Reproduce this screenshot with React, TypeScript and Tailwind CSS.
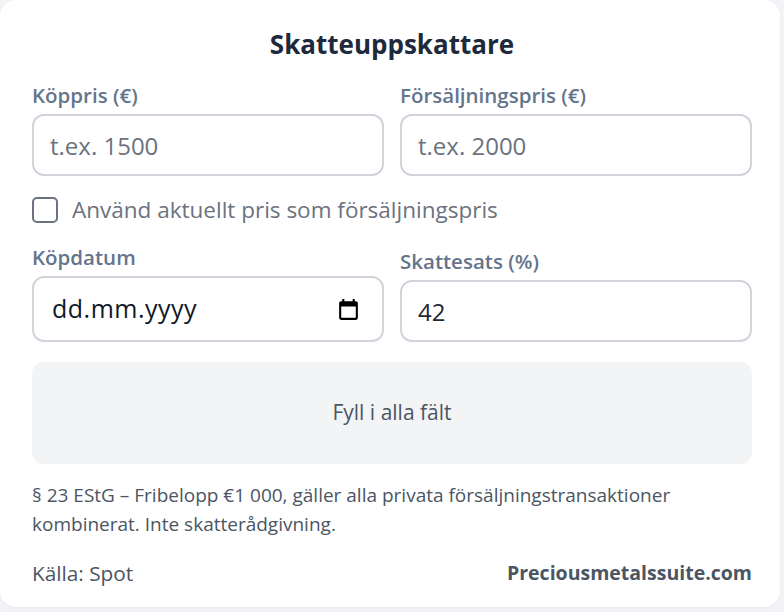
import { useState } from "react"

function Field({ label, children }: { label: string; children: React.ReactNode }) {
  return (
    <div className="flex flex-col">
      <label className="mb-[5px] text-[20.5px] font-semibold leading-[28px] text-[#64748b]">{label}</label>
      {children}
    </div>
  )
}

const inputCls =
  "w-full h-[62px] rounded-[12px] border-2 border-[#d1d5db] bg-white px-[16px] text-[24px] text-[#1f2937] placeholder:text-[#6b7280] outline-none"

function CalendarIcon() {
  return (
    <svg width="25" height="25" viewBox="0 0 24 24" className="shrink-0 text-black">
      <path
        d="M19 4h-1V2h-2v2H8V2H6v2H5c-1.11 0-2 .9-2 2v14a2 2 0 0 0 2 2h14c1.1 0 2-.9 2-2V6c0-1.1-.9-2-2-2zm0 16H5V9h14v11z"
        fill="currentColor"
      />
    </svg>
  )
}

export default function App() {
  const [rate, setRate] = useState("42")
  const [useSpot, setUseSpot] = useState(false)

  return (
    <div className="min-h-[612px] w-[784px] bg-[#f1f3f6] font-['Open_Sans',sans-serif]">
      <div className="w-[780px] h-[607px] rounded-[16px] bg-white pl-[32px] pr-[28px] pt-[26px] shadow-[0_1px_3px_rgba(0,0,0,0.04)]">
        <h2 className="text-center text-[26px] font-bold leading-[36px] text-[#1e293b]">Skatteuppskattare</h2>

        <div className="mt-[19px] grid grid-cols-2 gap-x-[16px]">
          <Field label="Köppris (€)">
            <input type="number" placeholder="t.ex. 1500" className={inputCls} />
          </Field>
          <Field label="Försäljningspris (€)">
            <input type="number" placeholder="t.ex. 2000" className={inputCls} />
          </Field>
        </div>

        <label className="mt-[20px] flex items-center gap-[14px] text-[22.5px] leading-[28px] text-[#6b7280]">
          <input
            type="checkbox"
            checked={useSpot}
            onChange={(e) => setUseSpot(e.target.checked)}
            className="h-[26px] w-[26px] shrink-0 appearance-none rounded-[5px] border-2 border-[#6b7280] bg-white"
          />
          Använd aktuellt pris som försäljningspris
        </label>

        <div className="mt-[19px] grid grid-cols-2 items-end gap-x-[16px]">
          <Field label="Köpdatum">
            <div className="flex h-[66px] w-full items-center justify-between rounded-[12px] border-2 border-[#d1d5db] bg-white pl-[18px] pr-[21px]">
              <input
                type="text"
                placeholder="dd.mm.yyyy"
                className="w-full bg-transparent text-[25px] tracking-[0.5px] text-[#111827] placeholder:text-[#111827] outline-none"
              />
              <CalendarIcon />
            </div>
          </Field>
          <Field label="Skattesats (%)">
            <input type="number" value={rate} onChange={(e) => setRate(e.target.value)} className={inputCls} />
          </Field>
        </div>

        <div className="mt-[20px] flex h-[102px] items-center justify-center rounded-[12px] bg-[#f3f4f6] text-[21px] text-[#4b5563]">
          Fyll i alla fält
        </div>

        <p className="mt-[17px] max-w-[690px] text-[19px] leading-[29px] text-[#4b5563]">
          § 23 EStG – Fribelopp €1 000, gäller alla privata försäljningstransaktioner kombinerat. Inte skatterådgivning.
        </p>

        <div className="mt-[20px] flex items-center justify-between text-[20.8px] leading-[28px] text-[#4b5563]">
          <span>Källa: Spot</span>
          <span className="text-[19.5px] font-bold">Preciousmetalssuite.com</span>
        </div>
      </div>
    </div>
  )
}
